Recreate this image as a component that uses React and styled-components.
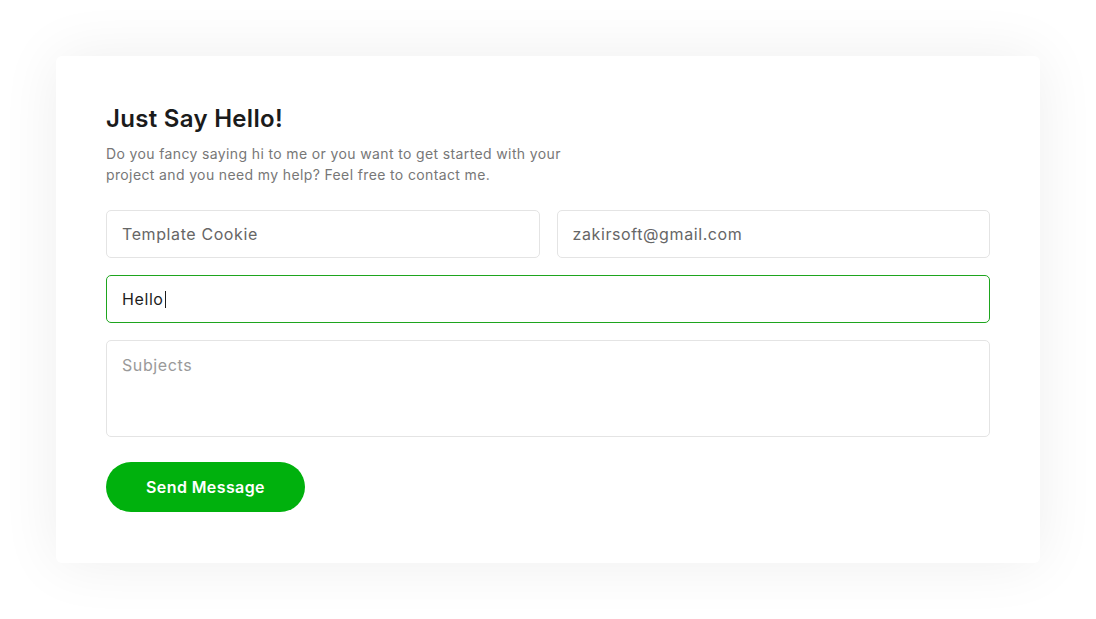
import React from 'react'
import styled, { createGlobalStyle, css } from 'styled-components'

const GlobalStyle = createGlobalStyle`
  html, body {
    margin: 0;
    padding: 0;
    background: #ffffff;
  }
  body {
    font-family: Inter, 'Open Sans', 'Noto Sans', sans-serif;
  }
`

const Page = styled.div`
  width: 1096px;
  height: 619px;
  padding: 56px;
  box-sizing: border-box;
`

const Card = styled.section`
  width: 984px;
  height: 507px;
  box-sizing: border-box;
  padding: 50px 50px;
  background: #ffffff;
  border-radius: 6px;
  box-shadow: 0 0 60px rgba(0, 0, 0, 0.07);
`

const Title = styled.h2`
  margin: 0 0 12px;
  padding-top: 1px;
  font-size: 24px;
  font-weight: 600;
  line-height: 24px;
  color: #1b1b1b;
  letter-spacing: 0.3px;
`

const Intro = styled.p`
  margin: 0 0 25px;
  font-size: 14px;
  line-height: 21px;
  color: #777777;
  letter-spacing: 0.37px;
`

const Form = styled.form`
  display: grid;
  grid-template-columns: 1fr 1fr;
  gap: 17px;
`

const Field = styled.div`
  grid-column: ${(p) => (p.$wide ? '1 / -1' : 'auto')};
  height: ${(p) => (p.$tall ? '97px' : '48px')};
  box-sizing: border-box;
  display: flex;
  align-items: ${(p) => (p.$tall ? 'flex-start' : 'center')};
  padding: ${(p) => (p.$tall ? '12px 15px' : '0 15px')};
  border: 1px solid #e4e4e4;
  border-radius: 5px;
  font-size: 16px;
  line-height: 24px;
  letter-spacing: 0.6px;
  ${(p) =>
    p.$focused &&
    css`
      border-color: #1ea51e;
    `}
`

const Value = styled.span`
  color: ${(p) => (p.$tone === 'typed' ? '#1d1d1d' : p.$tone === 'placeholder' ? '#9a9a9a' : '#666666')};
`

const Caret = styled.span`
  display: inline-block;
  width: 1px;
  height: 17px;
  margin-left: 1px;
  background: #1d1d1d;
`

const Actions = styled.div`
  grid-column: 1 / -1;
  padding-top: 8px;
`

const SendButton = styled.button`
  width: 199px;
  height: 50px;
  border: none;
  border-radius: 25px;
  background: #00b10d;
  color: #ffffff;
  font-family: inherit;
  font-size: 16px;
  font-weight: 600;
  letter-spacing: 0.4px;
  cursor: pointer;
`

export default function App() {
  return (
    <>
      <GlobalStyle />
      <Page>
        <Card>
          <Title>Just Say Hello!</Title>
          <Intro>
            Do you fancy saying hi to me or you want to get started with your
            <br />
            project and you need my help? Feel free to contact me.
          </Intro>
          <Form onSubmit={(e) => e.preventDefault()}>
            <Field>
              <Value>Template Cookie</Value>
            </Field>
            <Field>
              <Value>zakirsoft@gmail.com</Value>
            </Field>
            <Field $wide $focused>
              <Value $tone="typed">Hello</Value>
              <Caret />
            </Field>
            <Field $wide $tall>
              <Value $tone="placeholder">Subjects</Value>
            </Field>
            <Actions>
              <SendButton type="submit">Send Message</SendButton>
            </Actions>
          </Form>
        </Card>
      </Page>
    </>
  )
}
